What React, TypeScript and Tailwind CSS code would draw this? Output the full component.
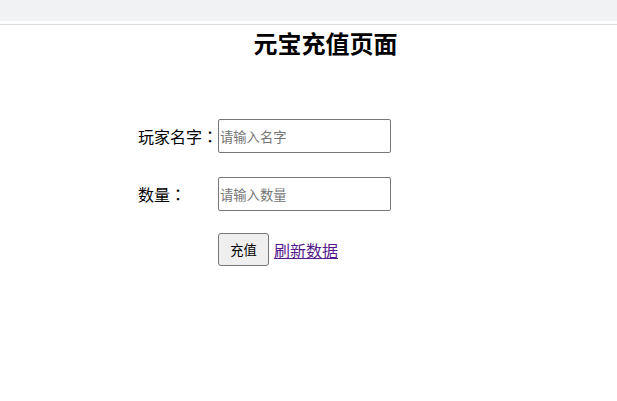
export default function App() {
  return (
    <div className="min-h-[401px] w-[617px] bg-white text-black [font-family:'Noto_Sans_CJK_SC','Microsoft_YaHei',sans-serif]">
      <div className="h-[21px] bg-[#f1f2f4]" />
      <div className="mt-[3px] h-px bg-[#dcdcdc]" />
      <h2 className="mt-[4px] pl-[34px] text-center text-[24px] leading-[28px] font-bold">元宝充值页面</h2>
      <form className="mt-[62px] ml-[138px] flex flex-col">
        <div className="flex items-center">
          <span className="w-[80px] shrink-0 whitespace-nowrap text-[16px] leading-[20px]">
            玩家名字<span className="[font-family:'Noto_Sans_CJK_JP',sans-serif]">：</span>
          </span>
          <input
            placeholder="请输入名字"
            className="h-[34px] w-[173px] rounded-[2px] border border-[#767676] px-px text-[13.3px] placeholder:text-[#757575] outline-none"
          />
        </div>
        <div className="mt-[24px] flex items-center">
          <span className="w-[80px] shrink-0 whitespace-nowrap text-[16px] leading-[20px]">
            数量<span className="[font-family:'Noto_Sans_CJK_JP',sans-serif]">：</span>
          </span>
          <input
            placeholder="请输入数量"
            className="h-[34px] w-[173px] rounded-[2px] border border-[#767676] px-px text-[13.3px] placeholder:text-[#757575] outline-none"
          />
        </div>
        <div className="mt-[22px] ml-[80px] flex items-center gap-[5px]">
          <button
            type="button"
            className="h-[33px] w-[51px] rounded-[3px] border border-[#767676] bg-[#efefef] text-[13.3px]"
          >
            充值
          </button>
          <a href="#" className="text-[16px] leading-[20px] text-[#551a8b] underline">
            刷新数据
          </a>
        </div>
      </form>
    </div>
  );
}
